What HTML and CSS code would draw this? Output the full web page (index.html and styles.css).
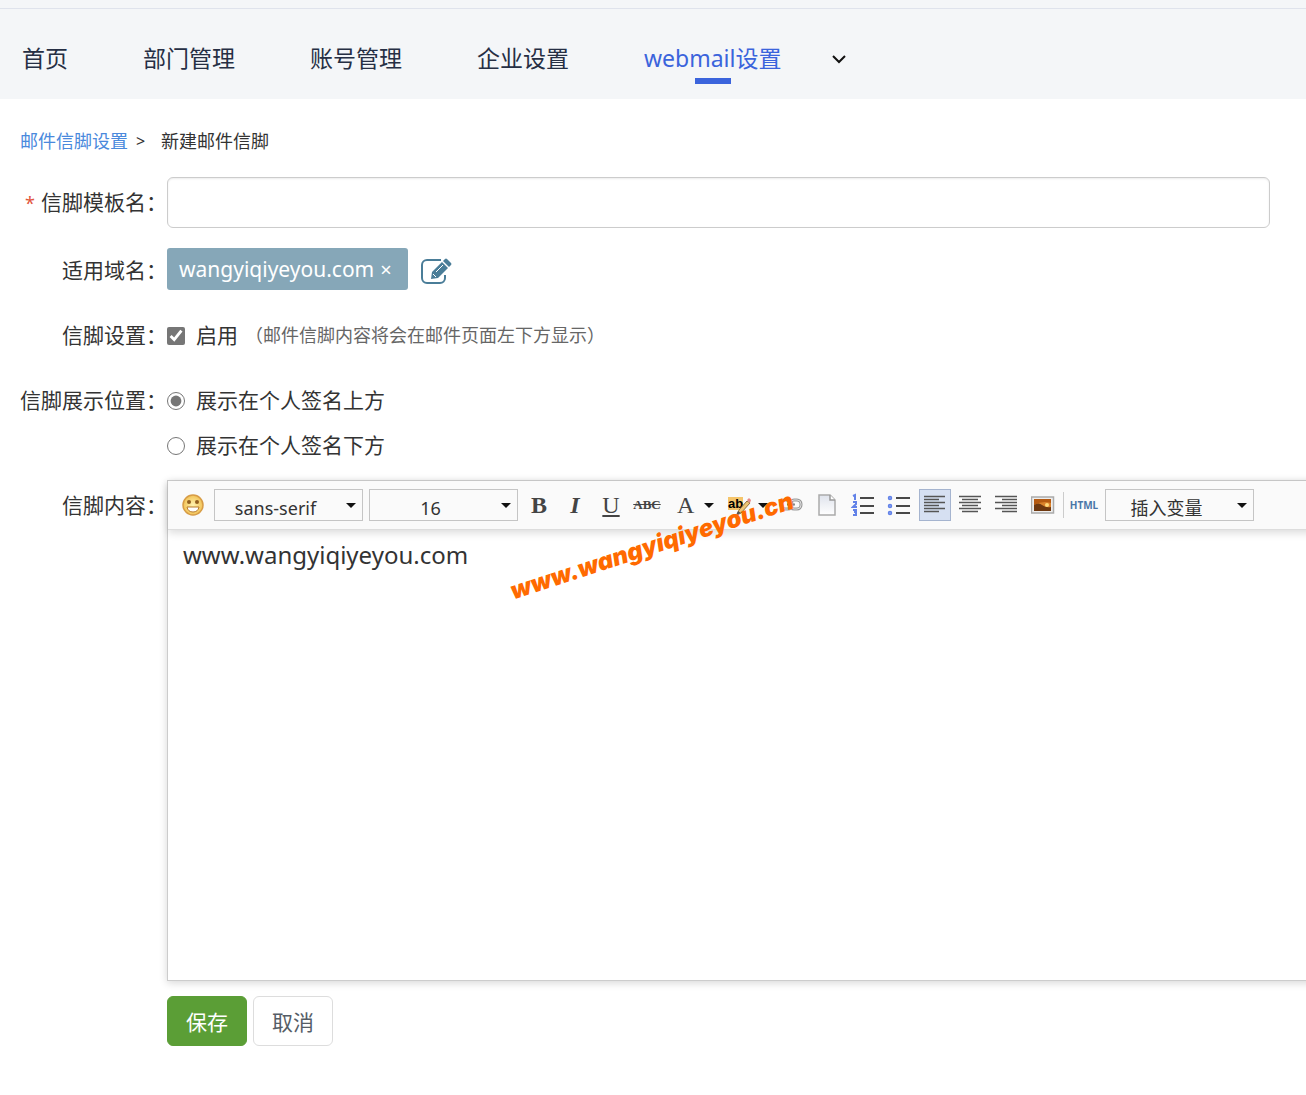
FILE: index.html
```html
<!DOCTYPE html>
<html lang="zh-CN">

<head>
    <meta charset="UTF-8">
    <meta name="viewport" content="width=device-width, initial-scale=1.0">
    <title>新建邮件信脚</title>
    <link rel="stylesheet" href="styles.css">
</head>

<body>

    <header class="header">
        <nav class="nav">
            <a href="#">首页</a>
            <a href="#">部门管理</a>
            <a href="#">账号管理</a>
            <a href="#">企业设置</a>
            <a href="#" class="active">webmail设置</a>
            <button type="button" class="nav-more" aria-label="更多">
                <svg width="14" height="10" viewBox="0 0 14 10"><path d="M1 2l6 6 6-6" fill="none" stroke="#111" stroke-width="2"/></svg>
            </button>
        </nav>
    </header>

    <main class="content">
        <div class="breadcrumb">
            <a href="#">邮件信脚设置</a>
            <span class="arrow">&gt;</span>
            <span>新建邮件信脚</span>
        </div>

        <form class="form">
            <div class="form-row form-row-tall">
                <label class="form-label" for="name"><span class="required">*</span>信脚模板名：</label>
                <div class="form-field">
                    <input class="text-input" type="text" id="name" name="name">
                </div>
            </div>

            <div class="form-row">
                <span class="form-label">适用域名：</span>
                <div class="form-field domains">
                    <span class="tag">wangyiqiyeyou.com<button type="button" class="tag-close" aria-label="删除">×</button></span>
                    <button type="button" class="icon-button" aria-label="编辑">
                        <svg width="32" height="28" viewBox="0 0 32 28">
                            <path d="M21 3H7a5 5 0 0 0-5 5v13a5 5 0 0 0 5 5h13a5 5 0 0 0 5-5v-3" fill="none" stroke="#4a7d98" stroke-width="2"/>
                            <path d="M11 22l1-7L22 5l6 6-10 10z" fill="#4a7d98"/>
                            <path d="M23 4l2-2q1-1 2 0l4 4q1 1 0 2l-2 2z" fill="#4a7d98"/>
                            <path d="M13 17l3 3M16 15l7-7" stroke="#fff" stroke-width="1"/>
                        </svg>
                    </button>
                </div>
            </div>

            <div class="form-row">
                <span class="form-label">信脚设置：</span>
                <div class="form-field">
                    <label class="option">
                        <input type="checkbox" name="enabled" checked>
                        启用
                        <span class="hint">（邮件信脚内容将会在邮件页面左下方显示）</span>
                    </label>
                </div>
            </div>

            <div class="form-row form-row-tight">
                <span class="form-label">信脚展示位置：</span>
                <div class="form-field">
                    <label class="option"><input type="radio" name="position" value="above" checked>展示在个人签名上方</label>
                    <label class="option"><input type="radio" name="position" value="below">展示在个人签名下方</label>
                </div>
            </div>

            <div class="form-row form-row-tall form-row-editor">
                <label class="form-label" for="body">信脚内容：</label>
                <div class="form-field editor">
                    <div class="toolbar">
                        <button type="button" class="tool" aria-label="表情">
                            <svg width="24" height="24" viewBox="0 0 24 24">
                                <defs>
                                    <radialGradient id="face"><stop offset="0" stop-color="#fff3b0"/><stop offset="1" stop-color="#f2c255"/></radialGradient>
                                </defs>
                                <circle cx="12" cy="12" r="10" fill="url(#face)" stroke="#d79c46" stroke-width="1.5"/>
                                <circle cx="8" cy="9" r="2" fill="#93601f"/>
                                <circle cx="16" cy="9" r="2" fill="#93601f"/>
                                <path d="M6 14h12q-1 5-6 5t-6-5z" fill="#fff" stroke="#b87a2b" stroke-width="1"/>
                            </svg>
                        </button>
                        <span class="select">
                            <select aria-label="字体"><option>sans-serif</option><option>serif</option></select>
                        </span>
                        <span class="select">
                            <select aria-label="字号"><option>16</option><option>18</option></select>
                        </span>
                        <button type="button" class="tool letter bold" aria-label="加粗">B</button>
                        <button type="button" class="tool letter italic" aria-label="斜体">I</button>
                        <button type="button" class="tool letter underline" aria-label="下划线">U</button>
                        <button type="button" class="tool letter strike" aria-label="删除线">ABC</button>
                        <button type="button" class="tool tool-wide letter" aria-label="文字颜色">A<span class="caret"></span></button>
                        <button type="button" class="tool tool-wide" aria-label="背景颜色">
                            <svg width="24" height="24" viewBox="0 0 24 24">
                                <rect x="1" y="4" width="15" height="13" fill="#f5c56b"/>
                                <text x="1" y="15" class="mark-text">ab</text>
                                <path d="M12 17L20 8l3 2-9 10-4 2z" fill="#eec574" stroke="#94713b" stroke-width="1"/>
                                <path d="M20 7l2-2 2 2-1 3z" fill="#e58a86"/>
                                <path d="M9 22l2-4 3 2z" fill="#555"/>
                            </svg>
                            <span class="caret"></span>
                        </button>
                        <button type="button" class="tool" aria-label="链接">
                            <svg width="24" height="24" viewBox="0 0 24 24">
                                <g fill="none">
                                    <rect x="2" y="7" width="11" height="9" rx="4" stroke="#999" stroke-width="3"/>
                                    <rect x="11" y="7" width="11" height="9" rx="4" stroke="#999" stroke-width="3"/>
                                    <rect x="2" y="7" width="11" height="9" rx="4" stroke="#ddd"/>
                                    <rect x="11" y="7" width="11" height="9" rx="4" stroke="#ddd"/>
                                    <path d="M8 11.500h8" stroke="#888" stroke-width="2"/>
                                </g>
                            </svg>
                        </button>
                        <button type="button" class="tool" aria-label="新建文档">
                            <svg width="24" height="24" viewBox="0 0 24 24">
                                <defs>
                                    <linearGradient id="page" x2="0" y2="1"><stop offset="0" stop-color="#dfe3ec"/><stop offset="1" stop-color="#fff"/></linearGradient>
                                </defs>
                                <path d="M4 2h11l5 5v15H4z" fill="url(#page)" stroke="#aaa" stroke-width="1.5"/>
                                <path d="M15 2v5h5" fill="#fff" stroke="#999" stroke-width="1.5"/>
                            </svg>
                        </button>
                        <button type="button" class="tool" aria-label="编号列表">
                            <svg width="24" height="24" viewBox="0 0 24 24">
                                <path d="M9 5h14M9 13h14M9 20h14" stroke="#484848" stroke-width="2"/>
                                <path d="M2 3l2-1v5M2 9h3v2l-3 3h4M2 17h3v5H2M3 19h2" fill="none" stroke="#6282e8" stroke-width="2"/>
                            </svg>
                        </button>
                        <button type="button" class="tool" aria-label="项目列表">
                            <svg width="24" height="24" viewBox="0 0 24 24">
                                <path d="M9 5h14M9 13h14M9 20h14" stroke="#484848" stroke-width="2"/>
                                <g fill="#9db4f5" stroke="#6282e8" stroke-width="1.5"><circle cx="3" cy="5" r="1.500"/><circle cx="3" cy="13" r="1.500"/><circle cx="3" cy="20" r="1.500"/></g>
                            </svg>
                        </button>
                        <button type="button" class="tool selected" aria-label="左对齐">
                            <svg width="24" height="24" viewBox="0 0 24 24"><path d="M1 3.500h21M1 6.500h15M1 9.500h21M1 12.500h15M1 15.500h21M1 18.500h15" stroke="#555" stroke-width="1.6"/></svg>
                        </button>
                        <button type="button" class="tool" aria-label="居中">
                            <svg width="24" height="24" viewBox="0 0 24 24"><path d="M0 3.500h22M3 6.500h16M0 9.500h22M3 12.500h16M0 15.500h22M3 18.500h16" stroke="#555" stroke-width="1.6"/></svg>
                        </button>
                        <button type="button" class="tool" aria-label="右对齐">
                            <svg width="24" height="24" viewBox="0 0 24 24"><path d="M0 3.500h22M7 6.500h15M0 9.500h22M7 12.500h15M0 15.500h22M7 18.500h15" stroke="#555" stroke-width="1.6"/></svg>
                        </button>
                        <button type="button" class="tool" aria-label="图片">
                            <svg width="24" height="24" viewBox="0 0 24 24">
                                <rect x="0.500" y="4" width="22" height="16" fill="#eee" stroke="#aaa" stroke-width="1.5"/>
                                <rect x="3" y="6" width="17" height="12" fill="#d9822b"/>
                                <path d="M3 6h17v4q-8-3-17 2z" fill="#b55a12"/>
                                <path d="M3 12q5-3 8 0 4 3 9 2v4H3z" fill="#6e3810"/>
                                <circle cx="16" cy="12" r="2" fill="#ffd97a"/>
                            </svg>
                        </button>
                        <span class="separator"></span>
                        <button type="button" class="tool html">HTML</button>
                        <span class="select">
                            <select aria-label="变量"><option>插入变量</option></select>
                        </span>
                    </div>
                    <textarea class="editor-body" id="body" name="body" spellcheck="false">www.wangyiqiyeyou.com</textarea>
                    <span class="watermark">www.wangyiqiyeyou.cn</span>
                </div>
            </div>

            <div class="actions">
                <button type="submit" class="button button-save">保存</button>
                <button type="button" class="button">取消</button>
            </div>
        </form>
    </main>

</body>

</html>
```
FILE: styles.css
```css
* {
    box-sizing: border-box;
}

body {
    margin: 0;
    font-family: "Noto Sans", "Noto Sans CJK SC", sans-serif;
    font-size: 21px;
    color: #333;
    background: #fff;
    overflow-x: hidden;
}

a {
    text-decoration: none;
}

button {
    padding: 0;
    border: 0;
    background: none;
    font-family: inherit;
    cursor: pointer;
}

svg {
    display: block;
}

.header {
    padding-top: 8px;
    background: #f4f6f8;
}

.nav {
    display: flex;
    align-items: flex-start;
    gap: 75px;
    height: 91px;
    padding: 31px 22px 0;
    border-top: 1px solid #dfe3ec;
    font-size: 23px;
    line-height: 36px;
}

.nav a {
    color: #262f44;
    white-space: nowrap;
}

.nav .active {
    display: flex;
    flex-direction: column;
    align-items: center;
    gap: 2px;
    color: #3b64dc;
}

.nav .active::after {
    content: "";
    width: 36px;
    height: 6px;
    background: #3b64dc;
}

.nav-more {
    height: 38px;
    margin-left: -24px;
}

.content {
    padding: 28px 36px 48px 20px;
}

.breadcrumb {
    display: flex;
    height: 50px;
    font-size: 18px;
    line-height: 28px;
}

.breadcrumb a {
    color: #4a89dc;
}

.breadcrumb .arrow {
    width: 33px;
    padding-left: 8px;
    font-size: 16px;
}

.form-row {
    display: flex;
    align-items: flex-start;
    margin-bottom: 20px;
    line-height: 45px;
}

.form-row-tall {
    line-height: 51px;
}

.form-row-tight {
    margin-bottom: 12px;
}

.form-row-editor {
    margin-bottom: 15px;
}

.form-label {
    flex: none;
    width: 147px;
    text-align: right;
    white-space: nowrap;
}

.required {
    margin-right: 6px;
    color: #e2563d;
    font-size: 18px;
    line-height: 1;
}

.form-field {
    flex: 1;
    min-width: 0;
}

.text-input {
    display: block;
    width: 100%;
    height: 51px;
    padding: 0 12px;
    border: 1px solid #ccc;
    border-radius: 6px;
    font: inherit;
    box-shadow: inset 0 1px 2px rgba(0, 0, 0, 0.08);
}

.domains {
    display: flex;
    align-items: flex-start;
    gap: 12px;
    height: 45px;
}

.tag {
    display: flex;
    align-items: center;
    height: 42px;
    padding: 0 16px 0 12px;
    border-radius: 3px;
    color: #fff;
    background: #86a7b8;
}

.tag-close {
    margin-left: 6px;
    color: #fff;
    font-size: 20px;
}

.icon-button {
    height: 46px;
}

.option {
    display: flex;
    align-items: center;
}

.option input {
    width: 18px;
    height: 18px;
    margin: 0 11px 0 0;
    accent-color: #767676;
}

.hint {
    margin-left: 7px;
    color: #666;
    font-size: 18px;
}

/* the editor runs past the form's right padding */
.editor {
    position: relative;
    margin-right: -56px;
    border: 1px solid #ccc;
    box-shadow: 0 2px 8px rgba(0, 0, 0, 0.16);
}

.toolbar {
    position: relative;
    display: flex;
    gap: 4px;
    padding: 8px 9px;
    border-bottom: 1px solid #ddd;
    background: #fafafa;
    box-shadow: 0 3px 8px rgba(0, 0, 0, 0.14);
    line-height: 32px;
}

.tool {
    display: flex;
    flex: none;
    align-items: center;
    justify-content: center;
    width: 32px;
    height: 32px;
    color: #444;
}

.tool-wide {
    justify-content: space-between;
    width: 50px;
    padding: 0 3px 0 6px;
}

.tool.selected {
    border: 1px solid #a5b4cf;
    background: #d6e0f2;
}

.letter {
    font-family: "Liberation Serif", serif;
    font-size: 24px;
}

.letter.tool-wide {
    padding-left: 10px;
}

.bold {
    font-weight: bold;
}

.italic {
    font-style: italic;
    font-weight: bold;
}

.underline {
    text-decoration: underline;
}

.strike {
    font-size: 13px;
    font-weight: bold;
    text-decoration: line-through;
}

.html {
    color: #4a76a8;
    font-size: 10px;
    font-weight: bold;
}

.mark-text {
    font-family: "Liberation Sans", sans-serif;
    font-size: 13px;
    font-weight: bold;
}

.caret,
.select::after {
    border: 5px solid transparent;
    border-top-color: #111;
    border-bottom: 0;
}

.select {
    position: relative;
    flex: none;
    width: 149px;
    height: 32px;
    margin: 0 1px;
}

.select::after {
    content: "";
    position: absolute;
    top: 14px;
    right: 7px;
    pointer-events: none;
}

.select select {
    display: block;
    width: 100%;
    height: 100%;
    padding: 5px 26px 0 0;
    border: 1px solid #c5c5c5;
    border-radius: 0;
    appearance: none;
    color: #333;
    background: transparent;
    font-family: inherit;
    font-size: 18px;
    text-align-last: center;
}

.separator {
    width: 1px;
    height: 26px;
    margin-top: 3px;
    background: #ccc;
}

.editor-body {
    display: block;
    width: 100%;
    height: 450px;
    padding: 7px 15px;
    border: 0;
    outline: 0;
    resize: none;
    color: #333;
    background: transparent;
    font-family: inherit;
    font-size: 24px;
    line-height: 36px;
}

.watermark {
    position: absolute;
    top: 94px;
    left: 348px;
    color: #ff6a00;
    font-family: Inter, sans-serif;
    font-size: 24px;
    font-style: italic;
    font-weight: 900;
    line-height: 32px;
    white-space: nowrap;
    transform: rotate(-18deg);
    transform-origin: left bottom;
    pointer-events: none;
}

.actions {
    display: flex;
    gap: 6px;
    padding-left: 147px;
}

.button {
    width: 80px;
    height: 50px;
    border: 1px solid #ddd;
    border-radius: 6px;
    color: #555d66;
    background: #fff;
    font-size: 21px;
}

.button-save {
    border-color: #5b9e36;
    color: #fff;
    background: #5b9e36;
}
```
